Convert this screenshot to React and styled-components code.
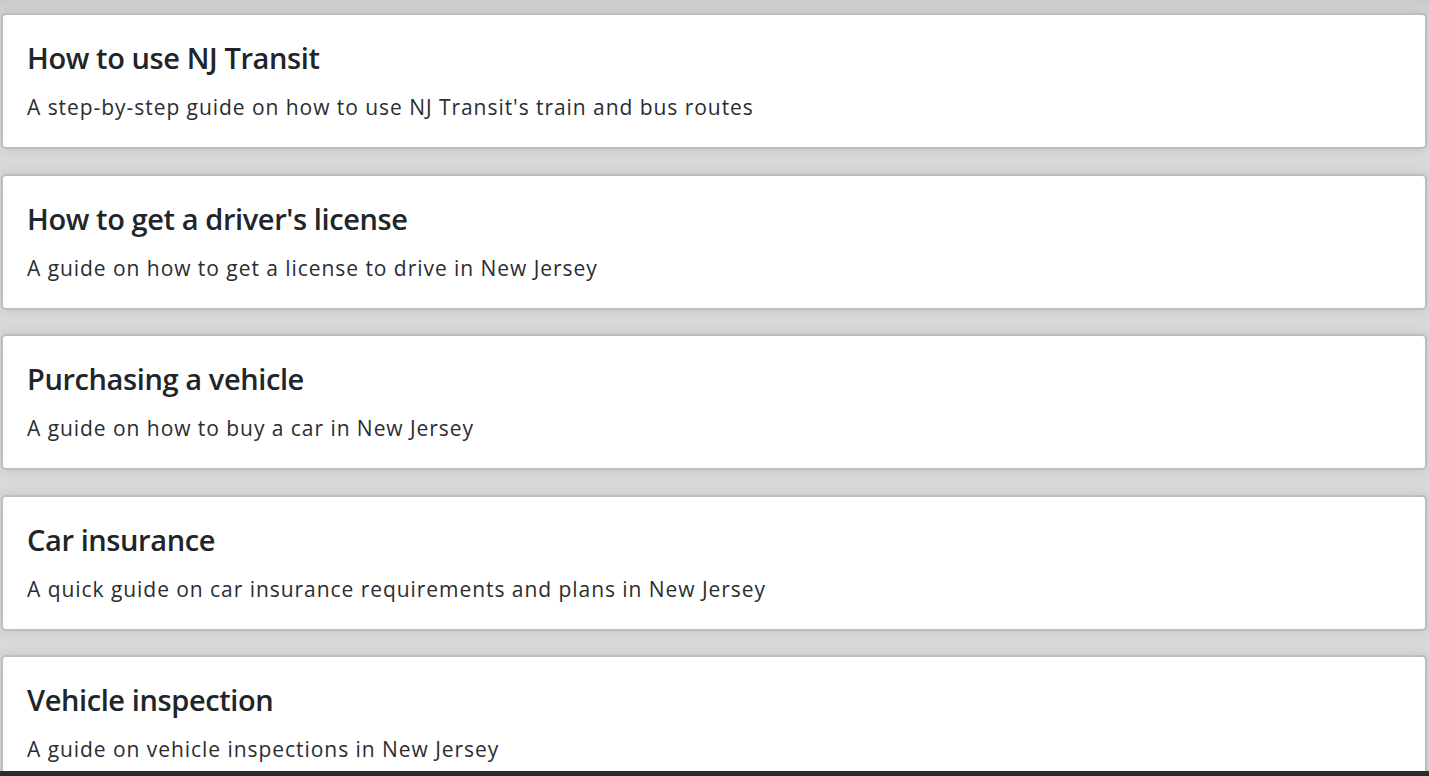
import React from "react";
import styled, { createGlobalStyle } from "styled-components";

const GlobalStyle = createGlobalStyle`
  html, body {
    margin: 0;
    padding: 0;
    background: #d9d9d9;
    font-family: "Open Sans", "Noto Sans", Arial, sans-serif;
    color: #212529;
  }
  * { box-sizing: border-box; }
`;

const Page = styled.div`
  min-height: 776px;
  padding: 13px 2px 0 1px;
  background: linear-gradient(to bottom, #c9c9c9 0px, #d2d2d2 10px, #d9d9d9 24px, #d9d9d9 100%);
`;

const List = styled.div`
  display: flex;
  flex-direction: column;
  gap: 24.5px;
`;

const Card = styled.a`
  display: block;
  height: 136px;
  background: #ffffff;
  border: 2px solid #bdbdbd;
  border-radius: 5px;
  padding: 25px 24px 25px 24px;
  text-decoration: none;
  color: inherit;
  box-shadow: 0 0 12px rgba(0, 0, 0, 0.1);
`;

const Title = styled.h3`
  margin: 0 0 16px 0;
  font-size: 29px;
  line-height: 36px;
  font-weight: 600;
  letter-spacing: -0.4px;
  color: #212529;
  white-space: nowrap;
`;

const Desc = styled.p`
  margin: 0;
  font-size: 21px;
  line-height: 30px;
  font-weight: 400;
  letter-spacing: 0.95px;
  color: #2a2d31;
  white-space: nowrap;
`;

const BottomBar = styled.div`
  position: fixed;
  left: 0;
  right: 0;
  bottom: 0;
  height: 5px;
  background: #2b2b2b;
`;

const guides = [
  {
    title: "How to use NJ Transit",
    desc: "A step-by-step guide on how to use NJ Transit's train and bus routes",
  },
  {
    title: "How to get a driver's license",
    desc: "A guide on how to get a license to drive in New Jersey",
  },
  {
    title: "Purchasing a vehicle",
    desc: "A guide on how to buy a car in New Jersey",
  },
  {
    title: "Car insurance",
    desc: "A quick guide on car insurance requirements and plans in New Jersey",
  },
  {
    title: "Vehicle inspection",
    desc: "A guide on vehicle inspections in New Jersey",
  },
];

export default function App() {
  return (
    <>
      <GlobalStyle />
      <Page>
        <List>
          {guides.map((g) => (
            <Card key={g.title}>
              <Title>{g.title}</Title>
              <Desc>{g.desc}</Desc>
            </Card>
          ))}
        </List>
      </Page>
      <BottomBar />
    </>
  );
}
